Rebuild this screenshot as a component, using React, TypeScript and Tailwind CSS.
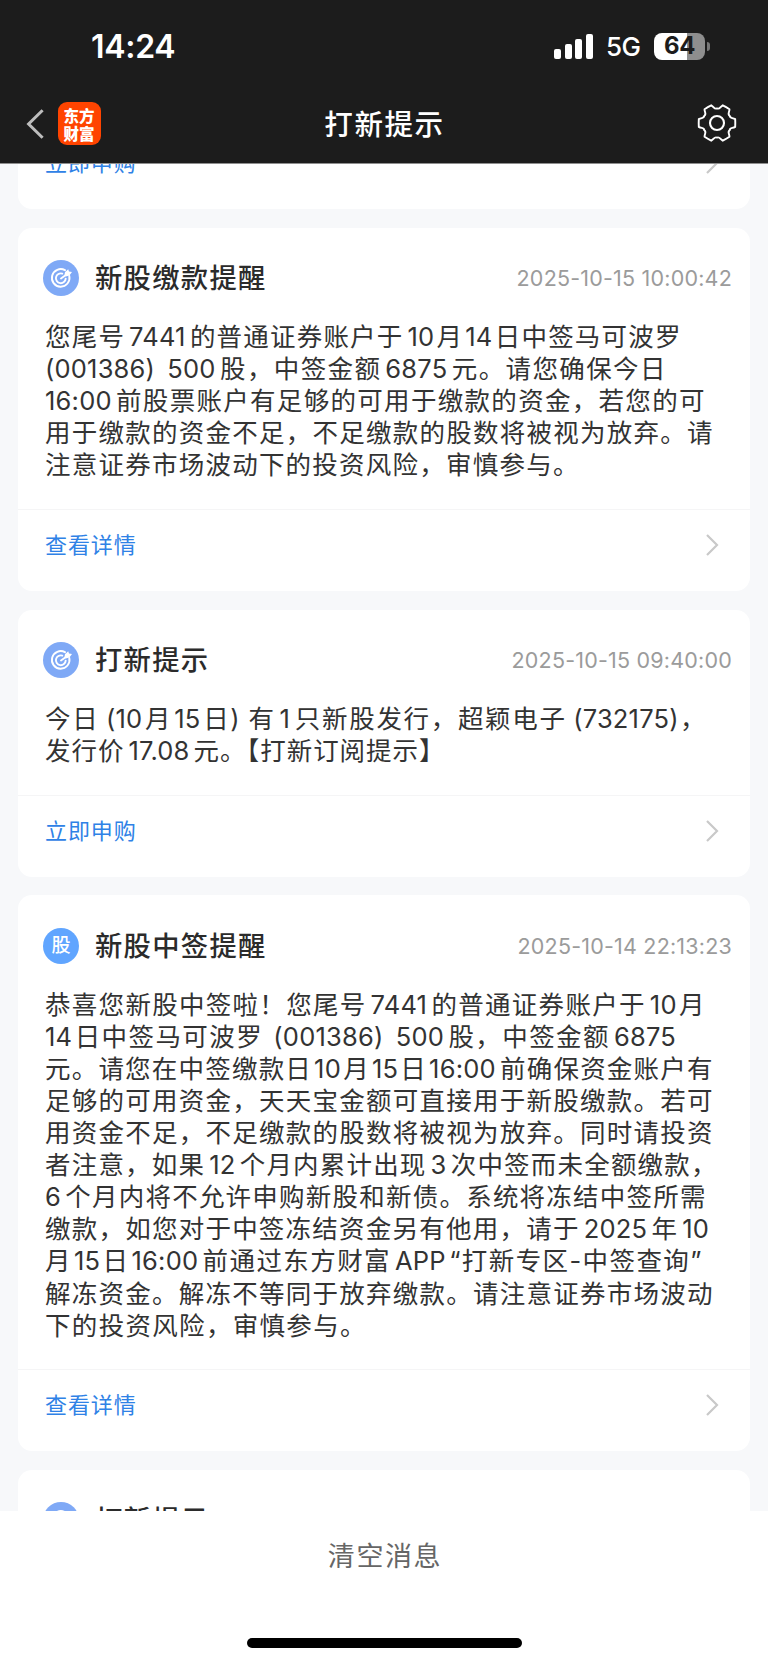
import React from "react";

const CJK = "font-['Inter','Noto_Sans_CJK_SC',sans-serif]";

type Line = { text: string; width: number };

type Message = {
  kind: "target" | "stock";
  title: string;
  time: string;
  lines: Line[];
  action: string;
};

const messages: Message[] = [
  {
    kind: "target",
    title: "新股缴款提醒",
    time: "2025-10-15 10:00:42",
    action: "查看详情",
    lines: [
      { text: "您尾号7441的普通证券账户于10月14日中签马可波罗", width: 636 },
      { text: "(001386) 500股，中签金额6875元。请您确保今日", width: 621 },
      { text: "16:00前股票账户有足够的可用于缴款的资金，若您的可", width: 660 },
      { text: "用于缴款的资金不足，不足缴款的股数将被视为放弃。请", width: 668 },
      { text: "注意证券市场波动下的投资风险，审慎参与。", width: 534 },
    ],
  },
  {
    kind: "target",
    title: "打新提示",
    time: "2025-10-15 09:40:00",
    action: "立即申购",
    lines: [
      { text: "今日 (10月15日) 有1只新股发行，超颖电子 (732175)，", width: 661 },
      { text: "发行价17.08元。【打新订阅提示】", width: 400 },
    ],
  },
  {
    kind: "stock",
    title: "新股中签提醒",
    time: "2025-10-14 22:13:23",
    action: "查看详情",
    lines: [
      { text: "恭喜您新股中签啦！您尾号7441的普通证券账户于10月", width: 660 },
      { text: "14日中签马可波罗 (001386) 500股，中签金额6875", width: 631 },
      { text: "元。请您在中签缴款日10月15日16:00前确保资金账户有", width: 668 },
      { text: "足够的可用资金，天天宝金额可直接用于新股缴款。若可", width: 668 },
      { text: "用资金不足，不足缴款的股数将被视为放弃。同时请投资", width: 668 },
      { text: "者注意，如果12个月内累计出现3次中签而未全额缴款，", width: 672 },
      { text: "6个月内将不允许申购新股和新债。系统将冻结中签所需", width: 661 },
      { text: "缴款，如您对于中签冻结资金另有他用，请于2025年10", width: 664 },
      { text: "月15日16:00前通过东方财富APP“打新专区-中签查询”", width: 657 },
      { text: "解冻资金。解冻不等同于放弃缴款。请注意证券市场波动", width: 668 },
      { text: "下的投资风险，审慎参与。", width: 321 },
    ],
  },
];

function TargetIcon() {
  return (
    <svg viewBox="0 0 36 36" className="size-9 shrink-0" fill="none">
      <circle cx="18" cy="18" r="18" fill="#7fa9f6" />
      <g stroke="#fff" strokeWidth="1.9" strokeLinecap="round">
        <path d="M22 10.2A8.8 8.8 0 1 0 26.3 16" />
        <path d="M19.3 13.6A4.9 4.9 0 1 0 22.7 18.6" />
        <path d="M18 18.4L23.6 14.4" />
      </g>
      <path d="M21.4 15.6L22 12.2L25.2 9.2L26 11.6L29 12L26.4 15.4L22.8 16.6Z" fill="#fff" />
    </svg>
  );
}

function StockIcon() {
  return (
    <span className="flex size-9 shrink-0 items-center justify-center rounded-full bg-[#60a5ff] text-[19px] font-medium leading-none text-white">
      股
    </span>
  );
}

function Chevron() {
  return (
    <svg viewBox="0 0 14 24" className="mr-[31.5px] h-6 w-3.5" fill="none">
      <path d="M2 2L12 12L2 22" stroke="#c9c9c9" strokeWidth="2.2" />
    </svg>
  );
}

function polar(r: number, deg: number) {
  const a = (deg * Math.PI) / 180;
  return `${(r * Math.cos(a)).toFixed(2)} ${(r * Math.sin(a)).toFixed(2)}`;
}

const gearPath =
  [0, 60, 120, 180, 240, 300]
    .map(
      (t, i) =>
        `${i === 0 ? "M" : "L"}${polar(18.6, t - 12)}Q${polar(18.4, t)} ${polar(18.6, t + 12)}` +
        `C${polar(16.4, t + 20)} ${polar(13.6, t + 18)} ${polar(14.6, t + 30)}` +
        `C${polar(13.6, t + 42)} ${polar(16.4, t + 40)} ${polar(18.6, t + 48)}`
    )
    .join("") + "Z";

function Gear() {
  return (
    <svg viewBox="-20 -20 40 40" className="mb-[2px] size-10" fill="none" stroke="#fff" strokeWidth="1.9" strokeLinejoin="round">
      <path d={gearPath} />
      <circle r="7" strokeWidth="2.1" />
    </svg>
  );
}

function leftGap(previous: string, run: string) {
  if (!previous || run.startsWith(")")) return "ml-0";
  if (run.startsWith(" ")) return "-ml-[2px]";
  return /[日月]$/.test(previous) ? "ml-[2px]" : "ml-[4px]";
}

function rightGap(run: string, next: string) {
  if (!next || /[ )]$/.test(run)) return "mr-0";
  return /^[日月]/.test(next) ? "mr-[1.5px]" : "mr-[3.5px]";
}

function BodyLine({ text, width }: Line) {
  const parts = text.split(/([0-9A-Z.:() ]+)/);
  return (
    <p className="whitespace-pre [text-align-last:justify]" style={{ width }}>
      {parts.map((part, i) => {
        if (!part) return null;
        if (i % 2 === 0) return <React.Fragment key={i}>{part}</React.Fragment>;
        const words = part.includes(") 5") ? "[word-spacing:4px]" : "";
        return (
          <span
            key={i}
            className={`tracking-[0.2px] ${leftGap(parts[i - 1], part)} ${rightGap(part, parts[i + 1])} ${words}`}
          >
            {part}
          </span>
        );
      })}
    </p>
  );
}

function ActionRow({ label }: { label: string }) {
  return (
    <div className="flex h-[82px] shrink-0 items-start justify-between border-t border-[#f5f5f6] pl-[27px] pt-[23px]">
      <span className="text-[22px] leading-6 tracking-[0.9px] text-[#2f82e6]">{label}</span>
      <Chevron />
    </div>
  );
}

function CardHeader({ kind, title, time }: Pick<Message, "kind" | "title"> & { time?: string }) {
  return (
    <div className="flex h-[93.5px] items-start pl-[25px] pr-[18px] pt-[32.5px]">
      {kind === "target" ? <TargetIcon /> : <StockIcon />}
      <h2 className="ml-4 text-[27.3px] font-medium leading-[37px] tracking-[1.3px] text-[#2b2b2b]">{title}</h2>
      <time className="ml-auto text-[21.5px] leading-9 tracking-[0.2px] text-[#9b9b9b]">{time}</time>
    </div>
  );
}

function MessageCard({ message }: { message: Message }) {
  return (
    <article className="shrink-0 rounded-[14px] bg-white">
      <CardHeader kind={message.kind} title={message.title} time={message.time} />
      <div className="pb-[27.6px] pl-[27px] text-[25.5px] leading-[32.1px] tracking-[0.5px] text-[#333]">
        {message.lines.map((line) => (
          <BodyLine key={line.text} {...line} />
        ))}
      </div>
      <ActionRow label={message.action} />
    </article>
  );
}

function StatusBar() {
  return (
    <div className="flex h-[92px] items-center pl-[91px] pr-[58px] text-white">
      <span className="pt-[2px] text-[32px] font-semibold leading-none tracking-[-0.3px]">14:24</span>
      <div className="ml-auto flex items-center">
        <div className="flex h-[25px] items-end gap-[3.7px]">
          <i className="h-[10px] w-[7px] rounded-[2px] bg-white" />
          <i className="h-[14.5px] w-[7px] rounded-[2px] bg-white" />
          <i className="h-[20px] w-[7px] rounded-[2px] bg-white" />
          <i className="h-[25px] w-[7px] rounded-[2px] bg-white" />
        </div>
        <span className="ml-[13px] w-[36px] pt-[2px] text-[26px] font-medium leading-none tracking-[-0.5px]">5G</span>
        <div className="ml-[12px] flex h-[27px] w-[51px] items-center justify-center rounded-[8px] bg-[linear-gradient(90deg,#fff_64%,#8e8e8e_64%)] text-[24px] font-bold leading-none tracking-[-0.5px] text-[#1c1c1c]">
          64
        </div>
        <i className="ml-[2px] h-[9px] w-[3px] rounded-r-full bg-[#777]" />
      </div>
    </div>
  );
}

function NavBar() {
  return (
    <div className="grid h-[72px] grid-cols-[1fr_auto_1fr] items-center border-b border-[#8e8e8e] pb-[8px] text-white">
      <div className="flex items-center pl-[25px]">
        <svg viewBox="0 0 20 32" className="h-8 w-5" fill="none">
          <path d="M17.6 2.2L3.6 16L17.6 29.8" stroke="#bdbdbd" strokeWidth="3" />
        </svg>
        <div className="ml-[12.5px] flex h-[43px] w-[43px] flex-col items-center justify-center rounded-[9px] bg-[#ff4400] font-['Noto_Sans_CJK_SC',sans-serif] text-[15.5px] font-black leading-[18px]">
          <span>东方</span>
          <span>财富</span>
        </div>
      </div>
      <h1 className="pl-px pt-[4px] text-[28.5px] font-medium leading-none tracking-[1.6px]">打新提示</h1>
      <div className="flex justify-end pr-[31px]">
        <Gear />
      </div>
    </div>
  );
}

export default function App() {
  return (
    <div className={`flex h-[1662px] w-[768px] flex-col overflow-hidden bg-white ${CJK}`}>
      <header className="shrink-0 bg-[#1c1c1c]">
        <StatusBar />
        <NavBar />
      </header>
      <main className="flex min-h-0 flex-1 flex-col gap-[18.4px] overflow-hidden bg-[#f7f8fa] px-[18px]">
        <article className="flex h-[45.2px] shrink-0 flex-col justify-end overflow-hidden rounded-b-[14px] bg-white">
          <ActionRow label="立即申购" />
        </article>
        {messages.map((message) => (
          <MessageCard key={message.time} message={message} />
        ))}
        <article className="shrink-0 rounded-t-[14px] bg-white">
          <CardHeader kind="target" title="打新提示" />
        </article>
      </main>
      <footer className="flex h-[151px] shrink-0 flex-col items-center bg-white">
        <button className="h-[91px] pl-[2px] text-[27px] leading-[92px] tracking-[1.6px] text-[#666]">清空消息</button>
        <div className="mt-[36px] h-[9.5px] w-[275px] rounded-full bg-black" />
      </footer>
    </div>
  );
}
